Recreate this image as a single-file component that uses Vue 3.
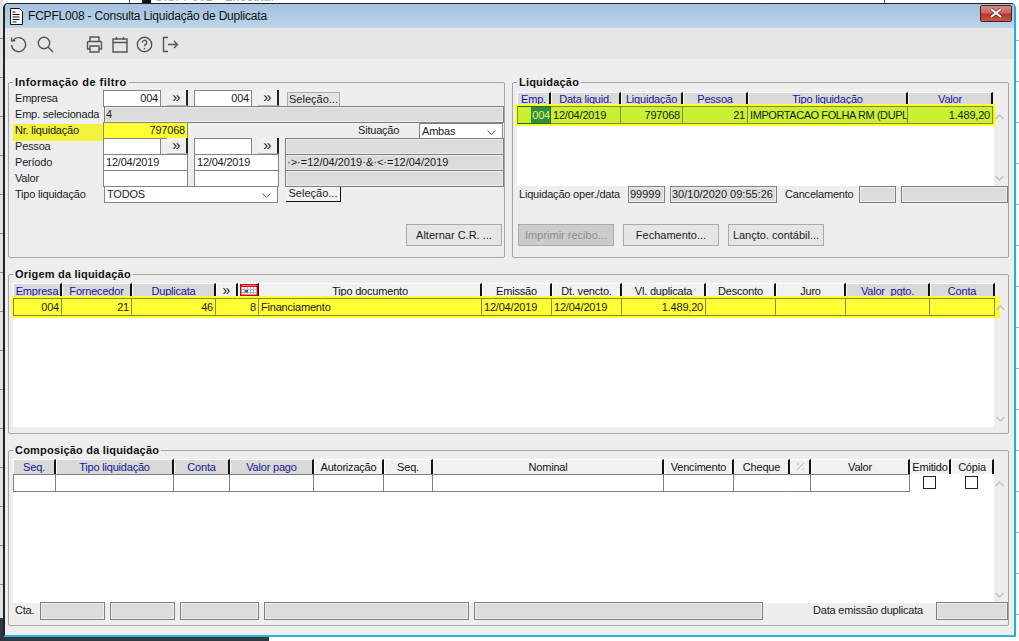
<script setup>
const liqCols = [
  { t: 'Emp.', w: 34, v: '004', r: 1, focus: 1 },
  { t: 'Data liquid.', w: 70, v: '12/04/2019' },
  { t: 'Liquidação', w: 62, v: '797068', r: 1 },
  { t: 'Pessoa', w: 65, v: '21', r: 1 },
  { t: 'Tipo liquidação', w: 160, v: 'IMPORTACAO FOLHA RM (DUPL', tight: 1 },
  { t: 'Valor', w: 85, v: '1.489,20', r: 1 }
]
const oriCols = [
  { t: 'Empresa', w: 49, v: '004', r: 1, blue: 1 },
  { t: 'Fornecedor', w: 70, v: '21', r: 1, blue: 1 },
  { t: 'Duplicata', w: 84, v: '46', r: 1, blue: 1 },
  { t: '»', w: 22, v: '', join: 1, icon: 'more' },
  { t: '', w: 21, v: '8', r: 1, icon: 'cal' },
  { t: 'Tipo documento', w: 223, v: 'Financiamento' },
  { t: 'Emissão', w: 70, v: '12/04/2019' },
  { t: 'Dt. vencto.', w: 70, v: '12/04/2019' },
  { t: 'Vl. duplicata', w: 84, v: '1.489,20', r: 1 },
  { t: 'Desconto', w: 70, v: '' },
  { t: 'Juro', w: 70, v: '' },
  { t: 'Valor  pgto.', w: 84, v: '', blue: 1 },
  { t: 'Conta', w: 65, v: '', blue: 1 }
]
const comCols = [
  { t: 'Seq.', w: 43, blue: 1 },
  { t: 'Tipo liquidação', w: 118, blue: 1 },
  { t: 'Conta', w: 56, blue: 1 },
  { t: 'Valor pago', w: 84, blue: 1 },
  { t: 'Autorização', w: 70 },
  { t: 'Seq.', w: 49 },
  { t: 'Nominal', w: 231 },
  { t: 'Vencimento', w: 70 },
  { t: 'Cheque', w: 56, join: 1 },
  { t: '', w: 21, icon: 'pct' },
  { t: 'Valor', w: 99 }
]
const ctaBoxes = [65, 65, 79, 205, 289]
</script>

<template>
  <div class="desk">
    <div class="back-top"><span class="back-icon"></span><span class="back-text">SISFP001 - Executar</span></div>
    <div class="back-left"></div>
    <div class="back-right"></div>
    <div class="back-bottom"></div>
    <div class="win">
      <div class="title">
        <svg class="doc" width="13" height="17" viewBox="0 0 13 17">
          <path d="M.5.5h9l3 3v13H.5z" fill="#fff" stroke="#111" />
          <path d="M2.5 4h3M2.5 6.5h7M2.5 9h7M2.5 11.5h7M2.5 14h4" stroke="#111" fill="none" />
        </svg>
        <span class="title-text">FCPFL008 - Consulta Liquidação de Duplicata</span>
        <div class="close">
          <svg width="14" height="10" viewBox="0 0 14 10">
            <path d="M2 1l10 8M12 1L2 9" stroke="#5a2a26" stroke-width="3.4" fill="none" />
            <path d="M2 1l10 8M12 1L2 9" stroke="#fff" stroke-width="2" fill="none" />
          </svg>
        </div>
      </div>

      <div class="toolbar">
        <svg class="tool t-undo" width="17" height="17" viewBox="0 0 17 17">
          <path d="M3.2 4.2A7 7 0 1 1 1.6 9" /><path d="M1.6 1.4v3.4h3.6" />
        </svg>
        <svg class="tool t-search" width="17" height="17" viewBox="0 0 17 17">
          <circle cx="7" cy="7" r="5.7" /><path d="M11 11l5 5" />
        </svg>
        <svg class="tool t-print" width="17" height="17" viewBox="0 0 17 17">
          <path d="M4 5.500V1h9v4.500M4 13H1.500V6.500a1 1 0 0 1 1-1h12a1 1 0 0 1 1 1V13H13" /><path d="M4 10h9v6H4z" />
        </svg>
        <svg class="tool t-cal" width="16" height="17" viewBox="0 0 16 17">
          <path d="M1 3h14v13H1zM1 6.500h14M4.500 1v3M11.500 1v3" />
        </svg>
        <svg class="tool t-help" width="17" height="17" viewBox="0 0 17 17">
          <circle cx="8.500" cy="8.500" r="7.200" /><path d="M6.300 6.500a2.200 2.200 0 1 1 3.300 1.900c-.8.5-1.100 1-1.100 1.900M8.500 12v1.200" />
        </svg>
        <svg class="tool t-exit" width="17" height="17" viewBox="0 0 17 17">
          <path d="M6 1.500H1.500v14H6M6 8.500h9.500M12 5l3.500 3.500L12 12" />
        </svg>
      </div>

      <div class="content">
        <div class="top-row">
          <section class="group g-filter">
            <div class="legend">Informação de filtro</div>
            <div class="frow">
              <span class="lab">Empresa</span>
              <span class="inp w58 right">004</span><span class="more m6">»</span>
              <span class="inp w58 m6 right">004</span><span class="more m6">»</span>
              <span class="btn-sm b-sel">Seleção...</span>
            </div>
            <div class="frow">
              <span class="lab">Emp. selecionada</span>
              <span class="ro wide">4</span>
            </div>
            <div class="frow">
              <span class="lab hl">Nr. liquidação</span>
              <span class="inp w85 right yellow">797068</span>
              <span class="sit-lab">Situação</span>
              <span class="sel sel-sit">Ambas<svg class="chev" width="9" height="5" viewBox="0 0 9 5"><path d="M.5.500l4 4 4-4" /></svg></span>
            </div>
            <div class="frow">
              <span class="lab">Pessoa</span>
              <span class="inp w58"></span><span class="more m6">»</span>
              <span class="inp w58 m6"></span><span class="more m6">»</span>
              <span class="ro rest m6"></span>
            </div>
            <div class="frow">
              <span class="lab">Período</span>
              <span class="inp w85">12/04/2019</span>
              <span class="inp w85 m6">12/04/2019</span>
              <span class="ro rest m6">·&gt;·=12/04/2019·&amp;·&lt;·=12/04/2019</span>
            </div>
            <div class="frow">
              <span class="lab">Valor</span>
              <span class="inp w85"></span>
              <span class="inp w85 m6"></span>
              <span class="ro rest m6"></span>
            </div>
            <div class="frow">
              <span class="lab">Tipo liquidação</span>
              <span class="sel sel-tipo">TODOS<svg class="chev" width="9" height="5" viewBox="0 0 9 5"><path d="M.5.500l4 4 4-4" /></svg></span>
              <span class="btn-sm b-sel2">Seleção...</span>
            </div>
            <div class="btn-row end">
              <span class="btn">Alternar C.R. ...</span>
            </div>
          </section>

          <section class="group g-liq">
            <div class="legend">Liquidação</div>
            <div class="table">
              <div class="table-main">
                <div class="thead">
                  <div v-for="c in liqCols" :key="c.t" class="th blue" :style="{ width: c.w + 'px' }">{{ c.t }}</div>
                </div>
                <div class="tbody liq-body">
                  <div class="trow lime">
                    <div v-for="c in liqCols" :key="c.t" class="td" :class="{ right: c.r, focus: c.focus, tight: c.tight }" :style="{ width: c.w + 'px' }">
                      <span>{{ c.v }}</span>
                    </div>
                  </div>
                </div>
              </div>
              <div class="scroll">
                <svg width="9" height="6" viewBox="0 0 9 6"><path d="M.5 5l4-4 4 4" /></svg>
                <svg width="9" height="6" viewBox="0 0 9 6"><path d="M.5 1l4 4 4-4" /></svg>
              </div>
            </div>
            <div class="oper">
              <span class="oper-lab">Liquidação oper./data</span>
              <span class="ro o1">99999</span>
              <span class="ro o2">30/10/2020 09:55:26</span>
              <span class="oper-can">Cancelamento</span>
              <span class="ro o3"></span>
              <span class="ro o4"></span>
            </div>
            <div class="btn-row">
              <span class="btn off">Imprimir recibo...</span>
              <span class="btn">Fechamento...</span>
              <span class="btn">Lançto. contábil...</span>
            </div>
          </section>
        </div>

        <section class="group g-ori">
          <div class="legend">Origem da liquidação</div>
          <div class="table">
            <div class="table-main">
              <div class="thead">
                <div v-for="(c, i) in oriCols" :key="i" class="th" :class="{ blue: c.blue, plain: !c.blue }" :style="{ width: c.w + 'px' }">
                  <span v-if="c.icon === 'more'" class="more-glyph">»</span>
                  <svg v-else-if="c.icon === 'cal'" class="cal" width="18" height="12" viewBox="0 0 18 12">
                    <rect x=".75" y=".75" width="16.500" height="10.500" fill="#fff" stroke="#e00000" stroke-width="1.500" />
                    <path d="M1 2.500h16" stroke="#e00000" stroke-width="1" />
                    <path d="M1.500 5.500h15M1.500 8.500h15M4.500 3v8M7.500 3v8M10.500 3v8M13.500 3v8" stroke="#b4b4d0" stroke-width="1" />
                    <rect x="5" y="6" width="3" height="2.500" fill="#1f6aa5" />
                  </svg>
                  <template v-else>{{ c.t }}</template>
                </div>
              </div>
              <div class="tbody ori-body">
                <div class="trow yel">
                  <div v-for="(c, i) in oriCols" :key="i" class="td" :class="{ right: c.r, nojoin: c.join }" :style="{ width: c.w + 'px' }">
                    <span>{{ c.v }}</span>
                  </div>
                </div>
              </div>
            </div>
            <div class="scroll">
              <svg width="9" height="6" viewBox="0 0 9 6"><path d="M.5 5l4-4 4 4" /></svg>
              <svg width="9" height="6" viewBox="0 0 9 6"><path d="M.5 1l4 4 4-4" /></svg>
            </div>
          </div>
        </section>

        <section class="group g-com">
          <div class="legend">Composição da liquidação</div>
          <div class="table">
            <div class="table-main">
              <div class="thead">
                <div v-for="(c, i) in comCols" :key="i" class="th" :class="{ blue: c.blue, plain: !c.blue }" :style="{ width: c.w + 'px' }">
                  <svg v-if="c.icon === 'pct'" width="9" height="9" viewBox="0 0 9 9"><path d="M1 8l7-7M1 2h2M6 7h2" stroke="#b5b5b5" fill="none" /></svg>
                  <template v-else>{{ c.t }}</template>
                </div>
                <div class="th plain" style="width: 41px">Emitido</div>
                <div class="th plain" style="width: 43px">Cópia</div>
              </div>
              <div class="tbody com-body">
                <div class="trow plain-row">
                  <div v-for="(c, i) in comCols" :key="i" class="td" :class="{ nojoin: c.join }" :style="{ width: c.w + 'px' }"></div>
                  <div class="checks"><span class="check"></span><span class="check"></span></div>
                </div>
              </div>
            </div>
            <div class="scroll">
              <svg width="9" height="6" viewBox="0 0 9 6"><path d="M.5 5l4-4 4 4" /></svg>
              <svg width="9" height="6" viewBox="0 0 9 6"><path d="M.5 1l4 4 4-4" /></svg>
            </div>
          </div>
          <div class="foot">
            <span class="cta">Cta.</span>
            <span v-for="(w, i) in ctaBoxes" :key="i" class="ro foot-box" :style="{ width: w + 'px' }"></span>
            <span class="foot-lab">Data emissão duplicata</span>
            <span class="ro foot-date"></span>
          </div>
        </section>
      </div>
    </div>
  </div>
</template>

<style>
html, body { margin: 0; background: #fff; }
</style>

<style scoped>
.desk {
  position: relative;
  width: 1019px;
  height: 641px;
  overflow: hidden;
  background: #fff;
  font: 11px "Liberation Sans", Arial, sans-serif;
  letter-spacing: -0.2px;
  color: #1c1c1c;
  padding: 3px 0 0 3px;
  box-sizing: border-box;
}
.back-top {
  position: absolute;
  left: 129px;
  top: 0;
  width: 754px;
  height: 3px;
  background: #fff;
  border-left: 1px solid #555;
  border-right: 1px solid #555;
  overflow: hidden;
}
.back-icon {
  position: absolute;
  left: 12px;
  top: 0;
  width: 9px;
  height: 3px;
  background: #111;
}
.back-text {
  position: absolute;
  left: 25px;
  top: -9px;
  font-size: 12px;
  line-height: 12px;
  letter-spacing: 0.4px;
  color: #a8a8a8;
  white-space: nowrap;
}
.back-left {
  position: absolute;
  left: 0;
  top: 0;
  width: 3px;
  height: 641px;
  background:
    linear-gradient(#2c3a40, #2c3a40) bottom / 100% 23px no-repeat,
    repeating-linear-gradient(#e2e2e2 0, #e2e2e2 38px, #8d8d8d 38px, #8d8d8d 39px);
}
.back-right {
  position: absolute;
  right: 0;
  top: 0;
  width: 3px;
  height: 641px;
  background: repeating-linear-gradient(#fff 0, #fff 40px, #aaa 40px, #aaa 41px);
}
.back-bottom {
  position: absolute;
  left: 0;
  bottom: 0;
  width: 269px;
  height: 4px;
  background: #2c3a40;
}
.win {
  position: relative;
  width: 1013px;
  height: 634px;
  box-sizing: border-box;
  background: #b9d3ea;
  border: 1px solid #222;
  border-left-width: 2px;
  border-right: 2px solid #2aa8e0;
  border-bottom: 2px solid #29b4e2;
  border-radius: 5px 5px 0 0;
  display: flex;
  flex-direction: column;
}
.title {
  height: 24px;
  flex: none;
  display: flex;
  align-items: center;
  background: linear-gradient(#a3c1dd, #bcd6ea);
  border-radius: 4px 4px 0 0;
}
.doc { margin-left: 5px; }
.title-text {
  margin-left: 5px;
  font-size: 12px;
  color: #111;
}
.close {
  margin-left: auto;
  margin-right: 2px;
  margin-top: -6px;
  width: 32px;
  height: 17px;
  box-sizing: border-box;
  border: 1px solid #4a2420;
  border-radius: 2px;
  background: linear-gradient(#d98a7e 0%, #c9685c 45%, #b8352a 55%, #c9584a 100%);
  display: flex;
  align-items: center;
  justify-content: center;
}
.toolbar {
  height: 31px;
  flex: none;
  background: #e6e6e6;
  display: flex;
  align-items: center;
  padding-top: 1px;
  box-sizing: border-box;
}
.tool {
  fill: none;
  stroke: #555;
  stroke-width: 1.4;
  flex: none;
}
.t-undo { margin-left: 5px; }
.t-search { margin-left: 10px; }
.t-print { margin-left: 32px; }
.t-cal { margin-left: 9px; }
.t-help { margin-left: 8px; }
.t-exit { margin-left: 9px; }
.content {
  flex: 1;
  background: #eee;
  padding: 23px 5px 0 3px;
  display: flex;
  flex-direction: column;
  gap: 16px;
}
.top-row {
  display: flex;
  gap: 7px;
  height: 176px;
}
.group {
  border: 1px solid #a5a5a5;
  box-sizing: border-box;
  padding: 0 0 0 4px;
  border-radius: 2px;
}
.g-filter { width: 497px; height: 176px; }
.g-liq { width: 497px; height: 176px; }
.g-ori { height: 160px; }
.g-com { height: 176px; }
.legend {
  display: table;
  font-weight: 700;
  letter-spacing: 0.2px;
  line-height: 14px;
  height: 14px;
  margin: -8px 0 2px 0;
  padding: 0 2px;
  background: #eee;
  color: #111;
}
.g-filter .legend { margin-bottom: 1px; letter-spacing: 0.45px; }
.g-liq .legend { margin-bottom: 3px; }
.g-liq .thead, .g-liq .th { height: 14px; }
.g-liq .th { line-height: 13px; }
.frow {
  display: flex;
  height: 16px;
  align-items: flex-start;
  position: relative;
}
.lab {
  width: 90px;
  flex: none;
  line-height: 16px;
  padding-left: 2px;
  box-sizing: border-box;
}
.hl {
  background: #f2f23a;
  height: 17px;
  line-height: 13px;
  margin-top: 2px;
}
.inp, .ro, .sel {
  display: block;
  height: 17px;
  line-height: 15px;
  box-sizing: border-box;
  border: 1px solid #858585;
  background: #fff;
  padding: 0 2px;
  flex: none;
  white-space: nowrap;
  overflow: hidden;
}
.right { text-align: right; }
.w58 { width: 58px; }
.w85 { width: 85px; }
.sel-sit { width: 84px; margin-top: 1px; height: 16px; position: relative; }
.sel-tipo { width: 174px; margin-left: 1px; position: relative; }
.m6 { margin-left: 6px; }
.yellow { background: #ffff33; position: relative; }
.ro {
  background: #dcdcdc;
  border: 1px solid #808080;
  box-shadow: inset 0 0 0 1px #ececec;
  padding: 0 1px;
  letter-spacing: 0;
}
.wide { width: 400px; margin-left: 1px; }
.rest { width: 219px; }
.more {
  display: block;
  flex: none;
  width: 21px;
  height: 16px;
  line-height: 13px;
  font-size: 15px;
  letter-spacing: 0;
  text-align: center;
  background: #f0f0f0;
  border-right: 2px solid #222;
  border-bottom: 1px solid #bbb;
  box-sizing: border-box;
}
.sit-lab { margin-left: 170px; width: 61px; flex: none; line-height: 16px; }
.chev {
  position: absolute;
  right: 6px;
  top: 6px;
  fill: none;
  stroke: #555;
}
.btn-sm {
  display: block;
  flex: none;
  box-sizing: border-box;
  height: 15px;
  line-height: 13px;
  text-align: center;
  letter-spacing: 0;
}
.b-sel {
  width: 53px;
  margin: 2px 0 0 8px;
  background: #e4e4e4;
  border: 1px solid #aaa;
}
.b-sel2 {
  width: 55px;
  margin: 1px 0 0 8px;
  background: #f2f2f2;
  border-right: 1px solid #111;
  border-bottom: 1px solid #111;
}
.btn-row {
  display: flex;
  gap: 9px;
  margin-left: 1px;
}
.btn {
  width: 96px;
  height: 22px;
  line-height: 20px;
  box-sizing: border-box;
  border: 1px solid #aaa;
  background: #e5e5e5;
  text-align: center;
  letter-spacing: 0;
  white-space: nowrap;
}
.off { background: #cccccc; color: #8b8b8b; }
.end { justify-content: flex-end; margin-top: 22px; padding-right: 2px; }
.table {
  display: flex;
}
.table-main { flex: none; }
.thead {
  display: flex;
  height: 15px;
}
.th {
  flex: none;
  box-sizing: border-box;
  height: 15px;
  line-height: 14px;
  text-align: center;
  border-right: 2px solid #111;
  border-top: 1px solid #fff;
  border-left: 1px solid #fff;
  white-space: pre;
}
.blue { background: #d9d9d9; color: #16169a; }
.plain { background: #f1f1f1; color: #111; }
.more-glyph { display: block; font-size: 14px; line-height: 12px; letter-spacing: 0; }
.cal { display: block; margin: 0 0 0 1px; }
.tbody { background: #fff; }
.liq-body { height: 80px; width: 477px; }
.ori-body { height: 129px; width: 981px; }
.com-body { height: 129px; width: 981px; }
.trow {
  display: flex;
  height: 18px;
  position: relative;
}
.lime {
  background: #c9f032;
  box-shadow: 0 0 0 2px #ffff33;
}
.yel {
  background: #ffff33;
  box-shadow: 0 0 0 2px #ffff33, 4px 0 0 2px #ffff33;
}
.td {
  flex: none;
  box-sizing: border-box;
  border-right: 1px solid #8a8a2e;
  border-top: 1px solid #8a8a2e;
  border-bottom: 1px solid #8a8a2e;
  line-height: 16px;
  padding: 0 2px;
  white-space: nowrap;
  overflow: hidden;
}
.td:first-child { border-left: 1px solid #8a8a2e; }
.tight { letter-spacing: -0.42px; padding: 0 0 0 2px; }
.nojoin { border-right-color: transparent; }
.focus {
  border-color: #1f6e1f;
  padding-right: 0;
}
.focus span {
  display: inline-block;
  background: #2f8f3c;
  color: #e8f46a;
  padding-left: 1px;
}
.plain-row .td {
  height: 18px;
  border-color: #808080;
  background: #fff;
}
.plain-row .td.nojoin { border-right-color: transparent; }
.checks {
  display: flex;
  width: 84px;
}
.check {
  display: block;
  box-sizing: border-box;
  width: 13px;
  height: 13px;
  border: 1px solid #222;
  background: #fff;
  margin: 2px 0 0 13px;
}
.check + .check { margin-left: 29px; }
.scroll {
  width: 12px;
  flex: none;
  box-sizing: border-box;
  padding: 22px 0 5px 1px;
  display: flex;
  flex-direction: column;
  justify-content: space-between;
  position: relative;
}
.scroll svg { fill: none; stroke: #c4c4c4; stroke-width: 1.6; }
.oper {
  display: flex;
  align-items: flex-start;
  height: 38px;
}
.oper-lab { width: 109px; margin-left: 2px; line-height: 16px; flex: none; }
.o1 { width: 37px; }
.o2 { width: 107px; margin-left: 5px; }
.oper-can { width: 68px; margin-left: 8px; flex: none; line-height: 16px; }
.o3 { width: 37px; margin-left: 6px; }
.o4 { width: 107px; margin-left: 5px; }
.foot {
  display: flex;
  align-items: flex-start;
  gap: 5px;
  margin-top: -1px;
  position: relative;
}
.cta { width: 25px; margin-left: 2px; margin-right: -5px; line-height: 16px; }
.foot-box { height: 18px; }
.foot-lab { margin-left: 45px; width: 118px; line-height: 16px; white-space: nowrap; }
.foot-date { width: 72px; height: 18px; }
</style>
